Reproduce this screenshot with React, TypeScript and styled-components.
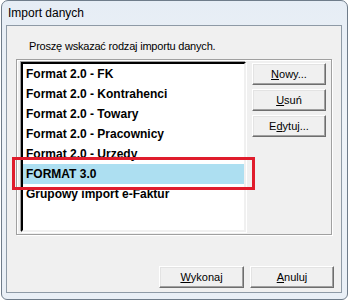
import React from "react";
import styled, { createGlobalStyle } from "styled-components";

const Global = createGlobalStyle`
  html, body { margin: 0; padding: 0; background: #ffffff; }
  body { font-family: "Liberation Sans", Arial, sans-serif; }
`;

const Window = styled.div`
  position: relative;
  box-sizing: border-box;
  width: 347px;
  height: 300px;
  margin-left: 1px;
  border: 1px solid #6f7c8a;
  border-radius: 7px 7px 6px 6px;
  background: linear-gradient(180deg, #e6edf5 0%, #eef3f8 40%, #e9eff6 100%);
  display: flex;
  flex-direction: column;
  overflow: hidden;
`;

const TitleBar = styled.div`
  height: 24px;
  padding-left: 6px;
  display: flex;
  align-items: center;
  font-size: 12px;
  color: #000;
`;

const Client = styled.div`
  flex: 1;
  margin: 0 5px 6px 4px;
  border: 1px solid #8e9aa6;
  background: #f0f0f0;
  display: flex;
  flex-direction: column;
  font-size: 11px;
  color: #000;
`;

const Prompt = styled.div`
  padding: 13px 0 0 22px;
  line-height: 14px;
  box-sizing: border-box;
  height: 33px;
  letter-spacing: -0.2px;
`;

const Panel = styled.div`
  margin: 0 9px 0 9px;
  height: 176px;
  box-sizing: border-box;
  border: 1px solid #a0a0a0;
  box-shadow: inset 1px 1px 0 #ffffff, 1px 1px 0 #ffffff;
  padding: 2px 5px 2px 4px;
  display: flex;
  gap: 6px;
`;

const ListBox = styled.div`
  width: 226px;
  height: 170px;
  box-sizing: border-box;
  border-style: solid;
  border-width: 2px;
  border-color: #000 #f0f0f0 #f0f0f0 #000;
  box-shadow: -1px -1px 0 #a0a0a0, 1px 1px 0 #ffffff;
  background: #ffffff;
  overflow: hidden;
`;

const Item = styled.div<{ $selected?: boolean }>`
  height: 20px;
  line-height: 20px;
  padding-left: 3px;
  font-size: 12px;
  font-weight: bold;
  white-space: nowrap;
  background: ${(p) => (p.$selected ? "#addff1" : "transparent")};
`;

const SideButtons = styled.div`
  display: flex;
  flex-direction: column;
  gap: 4px;
  padding-top: 1px;
`;

const Button = styled.button<{ $w: number }>`
  width: ${(p) => p.$w}px;
  height: 22px;
  box-sizing: border-box;
  margin: 0;
  padding: 0;
  background: #f0f0f0;
  border-style: solid;
  border-width: 1px;
  border-color: #ffffff #6e6e6e #6e6e6e #ffffff;
  box-shadow: inset -1px -1px 0 #a0a0a0, inset 1px 1px 0 #e3e3e3;
  font-family: "Liberation Sans", Arial, sans-serif;
  font-size: 11px;
  color: #000;
  display: flex;
  align-items: center;
  justify-content: center;
  u { text-decoration: underline; text-underline-offset: 1px; }
`;

const Footer = styled.div`
  flex: 1;
  display: flex;
  justify-content: flex-end;
  align-items: flex-start;
  gap: 6px;
  padding: 31px 7px 0 0;
`;

const Highlight = styled.div`
  position: absolute;
  left: 10px;
  top: 156px;
  width: 243px;
  height: 33px;
  box-sizing: border-box;
  border: 3px solid #e01c2c;
  pointer-events: none;
`;

const items = [
  "Format 2.0 - FK",
  "Format 2.0 - Kontrahenci",
  "Format 2.0 - Towary",
  "Format 2.0 - Pracownicy",
  "Format 2.0 - Urzedy",
  "FORMAT 3.0",
  "Grupowy import e-Faktur",
];

export default function App() {
  return (
    <>
      <Global />
      <Window>
        <TitleBar>Import danych</TitleBar>
        <Client>
          <Prompt>Proszę wskazać rodzaj importu danych.</Prompt>
          <Panel>
            <ListBox>
              {items.map((t) => (
                <Item key={t} $selected={t === "FORMAT 3.0"}>
                  {t}
                </Item>
              ))}
            </ListBox>
            <SideButtons>
              <Button $w={74}>
                <u>N</u>owy...
              </Button>
              <Button $w={74}>
                <u>U</u>suń
              </Button>
              <Button $w={74}>
                E<u>d</u>ytuj...
              </Button>
            </SideButtons>
          </Panel>
          <Footer>
            <Button $w={85}>
              <u>W</u>ykonaj
            </Button>
            <Button $w={84}>
              <u>A</u>nuluj
            </Button>
          </Footer>
        </Client>
        <Highlight />
      </Window>
    </>
  );
}
